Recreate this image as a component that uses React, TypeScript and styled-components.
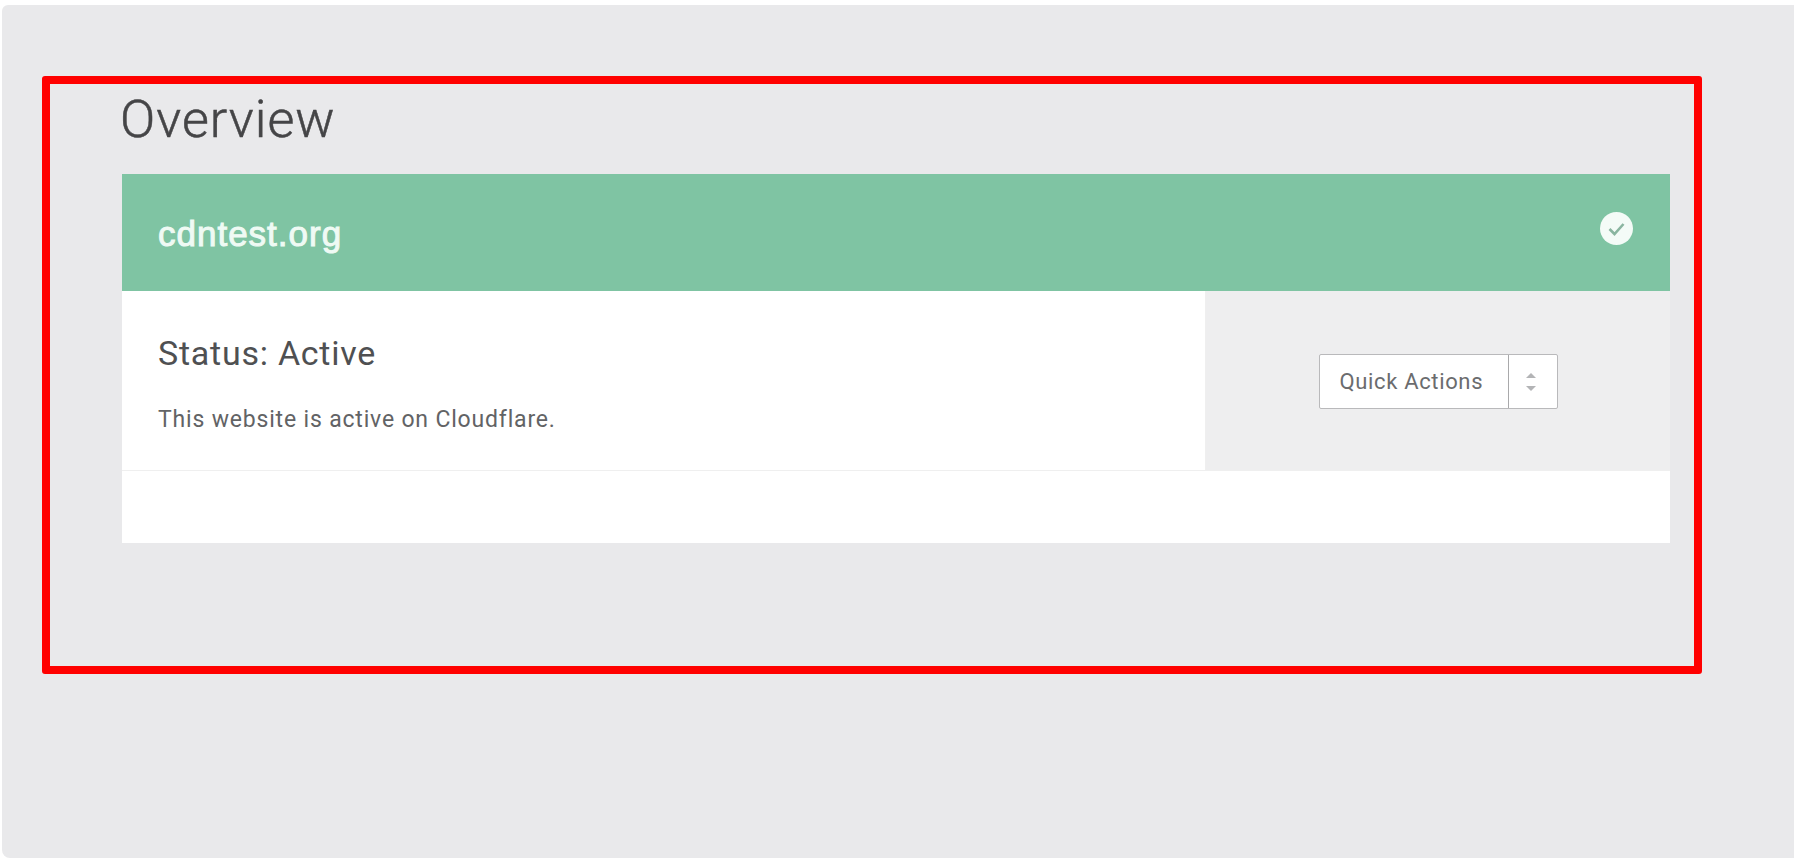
import React from "react";
import styled, { createGlobalStyle } from "styled-components";

const Global = createGlobalStyle`
  html, body { margin: 0; padding: 0; background: #ffffff; }
  body { font-family: Roboto, "Liberation Sans", sans-serif; overflow: hidden; }
`;

const Page = styled.div`
  width: 1794px;
  height: 858px;
  padding: 5px 0 0 2px;
  box-sizing: border-box;
  overflow: hidden;
`;

const Panel = styled.main`
  position: relative;
  height: 853px;
  box-sizing: border-box;
  padding: 84px 124px 0 120px;
  background: #e9e9eb;
  border-radius: 6px 0 0 8px;
`;

const Annotation = styled.div`
  position: absolute;
  left: 40px;
  top: 71px;
  width: 1660px;
  height: 598px;
  box-sizing: border-box;
  border: 8px solid #ff0000;
  border-radius: 3px;
  pointer-events: none;
`;

const Title = styled.h1`
  margin: 0 0 0 -2px;
  height: 85px;
  padding-top: 5px;
  box-sizing: border-box;
  font-size: 52px;
  line-height: 52px;
  font-weight: 300;
  letter-spacing: 1px;
  color: #454547;
  -webkit-text-stroke: 0.5px #454547;
`;

const Card = styled.section`
  background: #ffffff;
`;

const CardHeader = styled.header`
  height: 117px;
  display: flex;
  align-items: center;
  justify-content: space-between;
  box-sizing: border-box;
  padding: 0 37px 0 36px;
  background: #7fc4a3;
`;

const Domain = styled.h2`
  margin: 2px 0 0;
  font-family: "Liberation Sans", sans-serif;
  font-size: 35px;
  font-weight: 400;
  letter-spacing: 1px;
  color: #effaf4;
  -webkit-text-stroke: 1px #effaf4;
`;

const CheckIcon = styled.svg`
  width: 33px;
  height: 33px;
  margin-bottom: 8px;
`;

const StatusRow = styled.div`
  display: flex;
  height: 180px;
  border-bottom: 1px solid #efefef;
  box-sizing: border-box;
`;

const StatusInfo = styled.div`
  width: 1084px;
  box-sizing: border-box;
  padding: 42px 36px 0;
  background: #ffffff;
  border-right: 1px solid #efefef;
`;

const StatusTitle = styled.h3`
  margin: 0;
  font-size: 34px;
  line-height: 40px;
  font-weight: 400;
  letter-spacing: 0.75px;
  color: #4f5052;
`;

const StatusText = styled.p`
  margin: 32px 0 0;
  font-size: 23px;
  line-height: 30px;
  letter-spacing: 0.82px;
  color: #626365;
`;

const ActionCell = styled.div`
  flex: 1;
  display: flex;
  align-items: center;
  justify-content: center;
  padding-top: 2px;
  background: #eeeeef;
`;

const SplitButton = styled.div`
  display: flex;
  height: 55px;
  width: 239px;
  box-sizing: border-box;
  background: #ffffff;
  border: 1.5px solid #b9b9bb;
  border-radius: 2px;
`;

const ButtonLabel = styled.span`
  width: 189px;
  box-sizing: border-box;
  padding-left: 20px;
  border-right: 1.5px solid #a9a9ab;
  font-size: 22px;
  line-height: 53px;
  letter-spacing: 0.65px;
  color: #6b6c6e;
`;

const ButtonArrows = styled.span`
  flex: 1;
  display: flex;
  align-items: center;
  justify-content: center;
  padding-right: 4px;
`;

const CardFooter = styled.div`
  height: 72px;
  background: #ffffff;
`;

export default function App() {
  return (
    <Page>
      <Global />
      <Panel>
        <Title>Overview</Title>
        <Card>
          <CardHeader>
            <Domain>cdntest.org</Domain>
            <CheckIcon viewBox="0 0 33 33" aria-hidden="true">
              <circle cx="16.5" cy="16.5" r="16.5" fill="#f4fbf7" />
              <path d="M9.5 17l5 5 9-10" fill="none" stroke="#8ab5a0" strokeWidth="2.6" />
            </CheckIcon>
          </CardHeader>
          <StatusRow>
            <StatusInfo>
              <StatusTitle>Status: Active</StatusTitle>
              <StatusText>This website is active on Cloudflare.</StatusText>
            </StatusInfo>
            <ActionCell>
              <SplitButton>
                <ButtonLabel>Quick Actions</ButtonLabel>
                <ButtonArrows>
                  <svg width="12" height="20" viewBox="0 0 12 20" aria-hidden="true">
                    <path d="M6 1l5 5H1z" fill="#b3b4b6" />
                    <path d="M6 19l5-5H1z" fill="#b3b4b6" />
                  </svg>
                </ButtonArrows>
              </SplitButton>
            </ActionCell>
          </StatusRow>
          <CardFooter />
        </Card>
        <Annotation />
      </Panel>
    </Page>
  );
}
